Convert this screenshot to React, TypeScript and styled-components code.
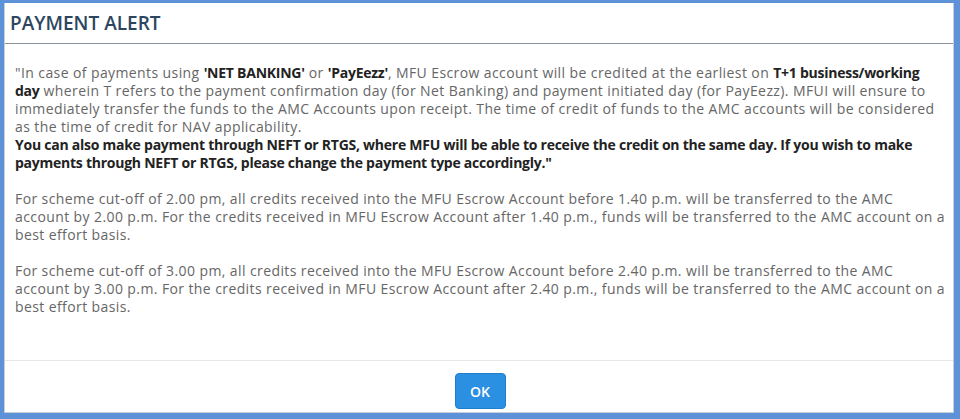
import { FC } from "react";
import styled, { createGlobalStyle } from "styled-components";

const GlobalStyle = createGlobalStyle`
  html, body {
    margin: 0;
    padding: 0;
    background: #ffffff;
  }
  body {
    font-family: "Open Sans", "Liberation Sans", sans-serif;
  }
`;

const App: FC = () => {
  return (
    <>
      <GlobalStyle />
      <Frame>
        <Dialog>
          <Header>
            <Title>PAYMENT ALERT</Title>
          </Header>
          <Body>
            <Paragraph>
              "In case of payments using <Strong>'NET BANKING'</Strong> or{" "}
              <Strong>'PayEezz'</Strong>, MFU Escrow account will be credited at the
              earliest on <Strong>T+1 business/working</Strong>
              <br />
              <Strong>day</Strong> wherein T refers to the payment confirmation day (for
              Net Banking) and payment initiated day (for PayEezz). MFUI will ensure to
              <br />
              immediately transfer the funds to the AMC Accounts upon receipt. The time of
              credit of funds to the AMC accounts will be considered
              <br />
              as the time of credit for NAV applicability.
              <br />
              <Strong>
                You can also make payment through NEFT or RTGS, where MFU will be able to
                receive the credit on the same day. If you wish to make
                <br />
                payments through NEFT or RTGS, please change the payment type accordingly."
              </Strong>
            </Paragraph>
            <Paragraph>
              For scheme cut-off of 2.00 pm, all credits received into the MFU Escrow
              Account before 1.40 p.m. will be transferred to the AMC
              <br />
              account by 2.00 p.m. For the credits received in MFU Escrow Account after
              1.40 p.m., funds will be transferred to the AMC account on a
              <br />
              best effort basis.
            </Paragraph>
            <Paragraph>
              For scheme cut-off of 3.00 pm, all credits received into the MFU Escrow
              Account before 2.40 p.m. will be transferred to the AMC
              <br />
              account by 3.00 p.m. For the credits received in MFU Escrow Account after
              2.40 p.m., funds will be transferred to the AMC account on a
              <br />
              best effort basis.
            </Paragraph>
          </Body>
          <Footer>
            <OkButton type="button">OK</OkButton>
          </Footer>
        </Dialog>
      </Frame>
    </>
  );
};

const Frame = styled.div`
  box-sizing: border-box;
  width: 960px;
  height: 419px;
  border-style: solid;
  border-color: #5d92d8;
  border-width: 3px 6px 6px 4px;
  background: #ffffff;
`;

const Dialog = styled.div`
  box-sizing: border-box;
  height: 100%;
  display: flex;
  flex-direction: column;
  border: 1px solid #c9ced6;
  border-top: none;
`;

const Header = styled.div`
  height: 40px;
  display: flex;
  align-items: center;
  padding: 0 5px;
  border-bottom: 1px solid #8d949c;
`;

const Title = styled.h2`
  margin: 0;
  font-size: 19px;
  font-weight: 600;
  color: #2c4660;
`;

const Body = styled.div`
  flex: 1;
  padding: 20px 0 0 10px;
  overflow: hidden;
  color: #666666;
  font-size: 14px;
  letter-spacing: 0.4px;
  line-height: 18px;
`;

const Paragraph = styled.p`
  margin: 0 0 18px 0;
  white-space: nowrap;
`;

const Strong = styled.b`
  font-weight: 700;
  color: #222222;
  letter-spacing: -0.25px;
`;

const Footer = styled.div`
  height: 52px;
  display: flex;
  justify-content: center;
  align-items: flex-start;
  padding-top: 12px;
  box-sizing: border-box;
  border-top: 1px solid #e6e6e6;
`;

const OkButton = styled.button`
  width: 51px;
  height: 36px;
  border: 1px solid #1f7fcf;
  border-radius: 4px;
  background: #2b8fe2;
  color: #ffffff;
  font-family: "Open Sans", "Liberation Sans", sans-serif;
  font-size: 14px;
  font-weight: 600;
  margin-left: 2px;
`;

export default App;
